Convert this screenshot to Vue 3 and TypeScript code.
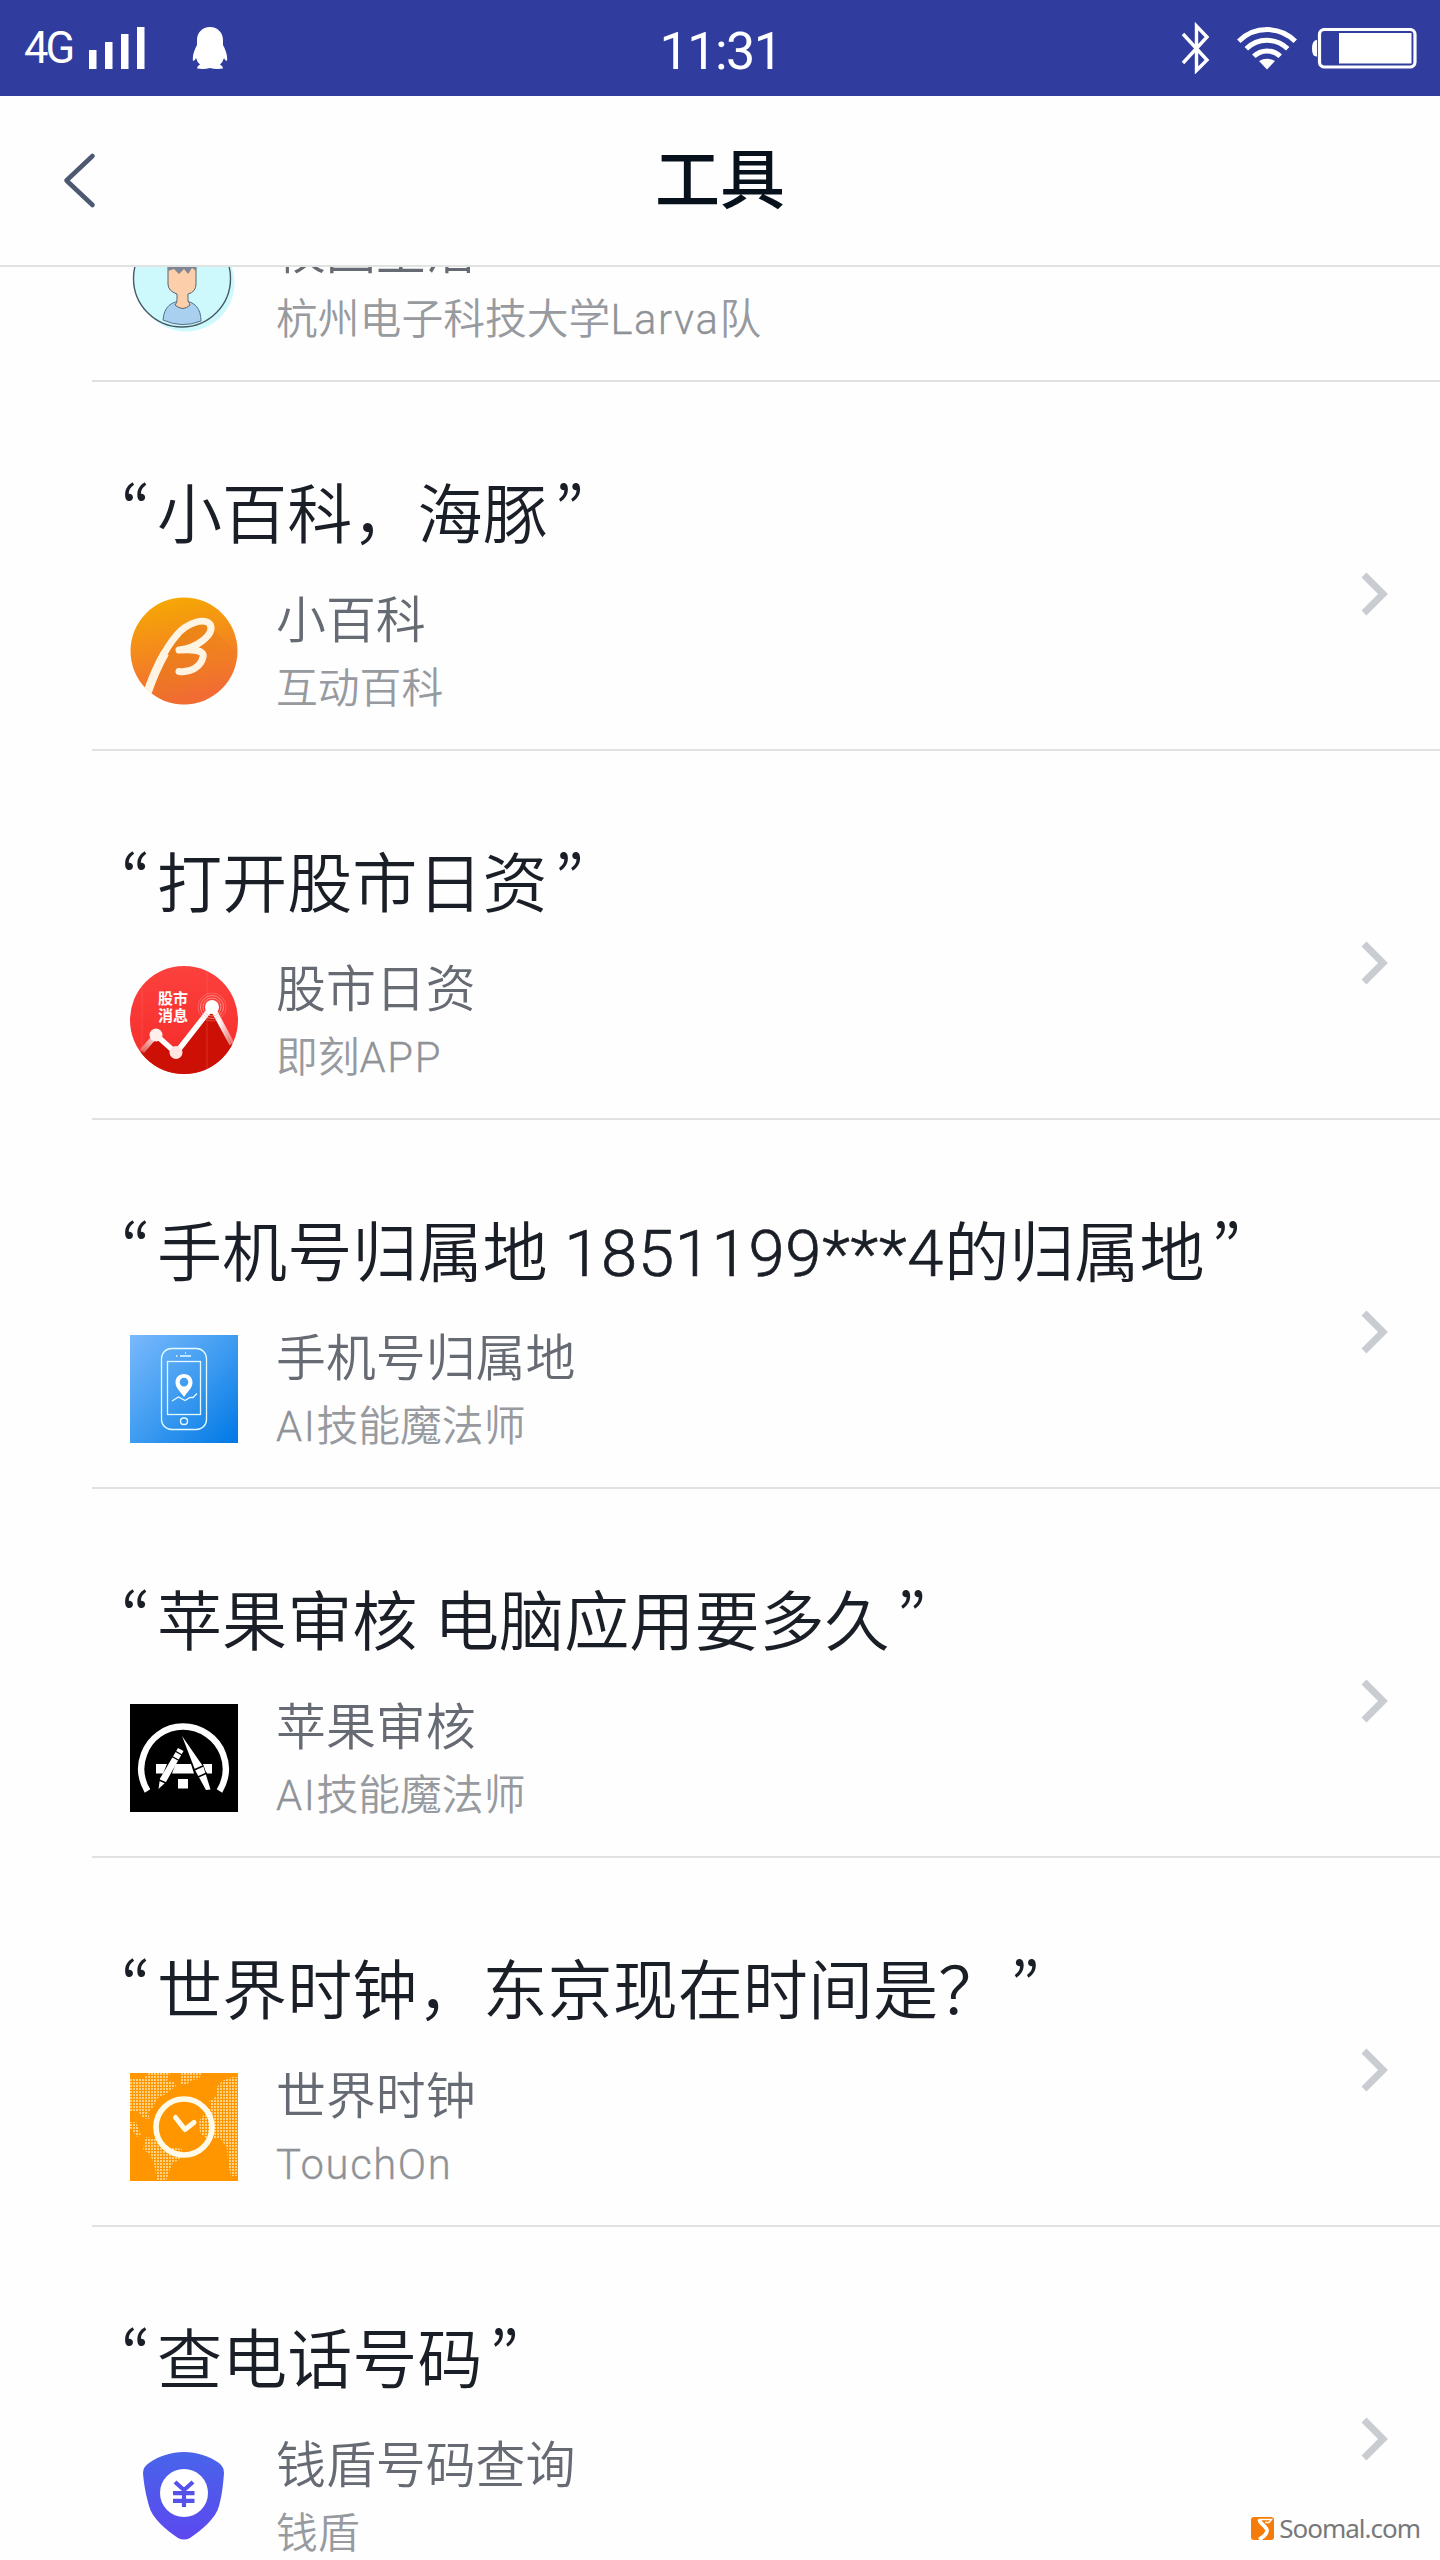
<script setup lang="ts">
type IconKind = 'campus' | 'beta' | 'stock' | 'phone' | 'appstore' | 'clock' | 'shield'

interface Skill {
  icon: IconKind
  phrase: string
  name: string
  vendor: string
}

const skills: Skill[] = [
  { icon: 'campus', phrase: '', name: '校园生活', vendor: '杭州电子科技大学Larva队' },
  { icon: 'beta', phrase: '小百科，海豚', name: '小百科', vendor: '互动百科' },
  { icon: 'stock', phrase: '打开股市日资', name: '股市日资', vendor: '即刻APP' },
  { icon: 'phone', phrase: '手机号归属地 1851199***4的归属地', name: '手机号归属地', vendor: 'AI技能魔法师' },
  { icon: 'appstore', phrase: '苹果审核 电脑应用要多久', name: '苹果审核', vendor: 'AI技能魔法师' },
  { icon: 'clock', phrase: '世界时钟，东京现在时间是？', name: '世界时钟', vendor: 'TouchOn' },
  { icon: 'shield', phrase: '查电话号码', name: '钱盾号码查询', vendor: '钱盾' },
]

// Latin runs carry their own weight and tracking next to the Chinese text.
function runs(text: string): { text: string; latin: boolean }[] {
  return (text.match(/[\x20-\x7e]+|[^\x20-\x7e]+/g) ?? []).map((part) => ({
    text: part,
    latin: /[\x20-\x7e]/.test(part),
  }))
}
</script>

<template>
  <div class="screen">
    <div class="status">
      <div class="status-left">
        <span class="network">4G</span>
        <svg class="signal" width="56" height="42" viewBox="0 0 56 42" fill="#fff">
          <rect x="0" y="23" width="7.5" height="19" />
          <rect x="16" y="15" width="7.5" height="27" />
          <rect x="32" y="7" width="7.5" height="35" />
          <rect x="48" y="0" width="7.5" height="42" />
        </svg>
        <svg class="penguin" width="36" height="42" viewBox="0 0 36 42" fill="#fff">
          <path d="M18 0C26 0 31 6 31 13V18C33 22 36 28 35 34Q33 34 32 31Q31 35 28 37.500Q31 39 31 41.500Q24 42.500 18 41Q12 42.500 5 41.500Q5 39 8 37.500Q5 35 4 31Q3 34 1 34C0 28 3 22 5 18V13C5 6 10 0 18 0Z" />
        </svg>
      </div>
      <span class="time">11:31</span>
      <div class="status-right">
        <svg width="30" height="52" viewBox="0 0 30 52" fill="none" stroke="#fff" stroke-width="3.400">
          <path d="M2 12L26 38L15.500 48.500V4L26 15L2 41" />
        </svg>
        <svg class="wifi" width="60" height="43" viewBox="0 0 60 43">
          <g fill="none" stroke="#fff" stroke-width="5">
            <path d="M1.800 14.200A40 40 0 0 1 58.200 14.200" />
            <path d="M9.300 21.800A29.500 29.500 0 0 1 50.700 21.800" />
            <path d="M16.800 29.300A18.800 18.800 0 0 1 43.200 29.300" />
          </g>
          <path d="M22 34Q30 29.500 38 34L30 42.500Z" fill="#fff" />
        </svg>
        <svg class="battery" width="105" height="41" viewBox="0 0 105 41">
          <path d="M5 12Q0 12 0 20.500T5 28.500Z" fill="#fff" />
          <rect x="7.500" y="1.500" width="95.500" height="37.500" rx="5" fill="none" stroke="#fff" stroke-width="3.200" />
          <rect x="27" y="5" width="72.500" height="30.500" fill="#fff" />
        </svg>
      </div>
    </div>

    <div class="header">
      <svg class="back" width="36" height="60" viewBox="0 0 36 60" fill="none" stroke="#4d5871" stroke-width="4.600" stroke-linecap="round" stroke-linejoin="round">
        <path d="M32.500 5L6.500 29.500L32.500 54" />
      </svg>
      <h1>工具</h1>
    </div>

    <div class="viewport">
      <ul class="list">
        <li v-for="skill in skills" :key="skill.icon" class="row">
          <div class="body">
            <p class="phrase"><template v-if="skill.phrase"><span class="quote open">“</span><span v-for="(run, i) in runs(skill.phrase)" :key="i" :class="{ 'phrase-latin': run.latin }">{{ run.text }}</span><span class="quote close">”</span></template></p>
            <div class="app">
              <svg class="icon" width="108" height="108" viewBox="0 0 108 108">
                <g v-if="skill.icon === 'campus'">
                  <circle cx="56" cy="55" r="48.500" fill="#cdf9fc" />
                  <circle cx="52" cy="50.500" r="48.500" fill="#cdf9fc" stroke="#475a66" stroke-width="1.400" />
                  <path d="M33 92C34 79 41 73 53 73C65 73 71 81 71 93A48 48 0 0 1 33 92Z" fill="#a9d0ee" stroke="#55708a" stroke-width="1" />
                  <path d="M38 30H66V56Q66 64 58 66V73Q60 76 60 77Q53 84 45 77Q47 75 47 72V66Q38 63 38 56Z" fill="#fdceaa" stroke="#5a6470" stroke-width="1" />
                  <path d="M38 28H66V43L62 40L58 46L54 41L49 46L44 41L38 43Z" fill="#7e8793" />
                </g>
                <g v-else-if="skill.icon === 'beta'">
                  <defs>
                    <linearGradient id="betaBg" x1="0" y1="0" x2=".2" y2="1">
                      <stop offset="0" stop-color="#f6ad00" />
                      <stop offset="1" stop-color="#f26a35" />
                    </linearGradient>
                    <linearGradient id="betaShade" x1="0" y1="0" x2="1" y2="1">
                      <stop offset="0" stop-color="#d7720e" />
                      <stop offset=".9" stop-color="#ee7a25" stop-opacity="0" />
                    </linearGradient>
                    <clipPath id="betaClip"><circle cx="54" cy="54" r="53.500" /></clipPath>
                  </defs>
                  <circle cx="54" cy="54" r="53.500" fill="url(#betaBg)" />
                  <g clip-path="url(#betaClip)">
                    <path d="M50 38Q64 23 78 28L108 56V108H30L22 88Q36 56 50 38Z" fill="url(#betaShade)" opacity=".6" />
                    <path d="M17 97C24 76 34 53 46 39C57 25 76 20 80.500 28C84 38 67 51 49 53C62 52 75 53 73 60C71 69 62 76 49 74.500" fill="none" stroke="#fff3e2" stroke-width="7" stroke-linecap="round" stroke-linejoin="round" />
                    <path d="M17 97C22 82 28 68 35 56" fill="none" stroke="#fff3e2" stroke-width="8.500" />
                  </g>
                </g>
                <g v-else-if="skill.icon === 'stock'">
                  <defs>
                    <linearGradient id="stockBg" x1="0" y1="0" x2="0" y2="1">
                      <stop offset="0" stop-color="#fc413e" />
                      <stop offset="1" stop-color="#f52b28" />
                    </linearGradient>
                    <linearGradient id="stockLine" gradientUnits="userSpaceOnUse" x1="10" y1="0" x2="103" y2="0">
                      <stop offset="0" stop-color="#fff" stop-opacity=".2" />
                      <stop offset=".2" stop-color="#fff" />
                      <stop offset=".85" stop-color="#fff" />
                      <stop offset="1" stop-color="#fff" stop-opacity=".3" />
                    </linearGradient>
                    <clipPath id="stockClip"><circle cx="54" cy="54" r="54" /></clipPath>
                  </defs>
                  <g clip-path="url(#stockClip)">
                    <rect width="108" height="108" fill="url(#stockBg)" />
                    <path d="M0 97L12 85L26 69L46 87L82 41L108 88V108H0Z" fill="#cc1006" />
                    <path d="M12 0V108M77 0V108" stroke="#ff7a70" stroke-width=".6" opacity=".5" />
                    <path d="M12 85L26 69L46 87L82 41L102 78" fill="none" stroke="url(#stockLine)" stroke-width="5.500" stroke-linejoin="round" />
                    <g fill="none" stroke="#ffb0aa" stroke-width=".7">
                      <circle cx="82" cy="41" r="9" />
                      <circle cx="82" cy="41" r="11.500" />
                      <circle cx="82" cy="41" r="14" opacity=".5" />
                    </g>
                    <circle cx="26" cy="69" r="6.500" fill="#fff0ee" />
                    <circle cx="46" cy="86.500" r="6.500" fill="#ffe6e3" />
                    <circle cx="82" cy="41" r="7" fill="#fff" />
                  </g>
                  <text class="stock-text" x="28" y="38">股市</text>
                  <text class="stock-text" x="28" y="55">消息</text>
                </g>
                <g v-else-if="skill.icon === 'phone'">
                  <defs>
                    <linearGradient id="phoneBg" x1="0" y1="0" x2="1" y2="1">
                      <stop offset="0" stop-color="#79b9fc" />
                      <stop offset=".5" stop-color="#3f9cf0" />
                      <stop offset="1" stop-color="#0078e6" />
                    </linearGradient>
                  </defs>
                  <rect width="108" height="108" fill="url(#phoneBg)" />
                  <g fill="none" stroke="#e6fbff" stroke-width="1.300">
                    <rect x="31.500" y="13.500" width="45" height="81" rx="10" />
                    <rect x="37.500" y="26.500" width="33" height="53" />
                    <path d="M50 21H61M46 21H47.500M55 18H56" stroke-width="1.600" />
                    <rect x="50.500" y="83" width="7" height="6.500" rx="3" />
                    <path d="M42 66L48.500 62L55 65.500L60 62.500H63L67 58.500" />
                  </g>
                  <path d="M54 39C59 39 62.500 42.500 62.500 47.500C62.500 53 57 57 54 62C51 57 45.500 53 45.500 47.500C45.500 42.500 49 39 54 39ZM54 42.800A4.300 4.300 0 1 0 54 51.400A4.300 4.300 0 1 0 54 42.800Z" fill="#fff" />
                </g>
                <g v-else-if="skill.icon === 'appstore'">
                  <rect width="108" height="108" fill="#000" />
                  <path d="M17.500 87C11 76 9 63 14 50C20 34 35 22.500 53 22.500S87 34 93 50C98 63 96 76 89.500 87" fill="none" stroke="#fff" stroke-width="6.400" />
                  <g fill="#fff">
                    <path d="M26 60H37L33 69.500H26ZM45.500 60H61L64 69.500H42ZM73 60H82V69.500H76.500ZM48 75H58V84.500H48Z" />
                    <path d="M48 44L53.500 47L36 78L28.500 85L30 74.500Z" />
                    <path d="M52 32L73.500 63L80.500 85.500L76 86L65.500 67Z" />
                  </g>
                  <path d="M45 47L52 51M42 52.500L50 57M29 76L36 79M64 66L73 62M68 73L77 69" stroke="#000" stroke-width="1.400" />
                </g>
                <g v-else-if="skill.icon === 'clock'">
                  <defs>
                    <pattern id="dots" width="3" height="3" patternUnits="userSpaceOnUse">
                      <rect width="2" height="2" fill="#ffe0a0" />
                    </pattern>
                  </defs>
                  <rect width="108" height="108" fill="#ff9600" />
                  <g fill="url(#dots)" opacity=".8">
                    <path d="M0 6L14 5L19 0H40L37 8H43L46 13L36 21L28 25L23 34L18 40L20 46L13 45L8 38H0Z" />
                    <path d="M50 0H72L69 6L62 7L56 12H50Z" />
                    <path d="M0 49L6 49L11 62L7 64L0 55Z" />
                    <path d="M16 64L26 66L34 73L52 76L51 86L43 90L39 99L36 108H27L24 90L20 82L13 76Z" />
                    <path d="M92 8L102 4H108V103H101L98 90L97 74L90 66L77 66L70 60L69 48L76 39L81 34L79 28L87 23L86 15Z" />
                  </g>
                  <circle cx="54" cy="54" r="28" fill="none" stroke="#fffbe8" stroke-width="5.600" />
                  <path d="M45.500 44.500L55 56.500L64 49.500" fill="none" stroke="#fffbe8" stroke-width="5" stroke-linecap="round" stroke-linejoin="round" />
                </g>
                <g v-else>
                  <defs>
                    <linearGradient id="shieldBg" x1="0" y1="0" x2="0" y2="1">
                      <stop offset="0" stop-color="#4864ea" />
                      <stop offset="1" stop-color="#5c48ef" />
                    </linearGradient>
                  </defs>
                  <path d="M54 10C67 10 79 14 89 21Q94 25 94 31C93 44 92 53 89 64C86 76 72 88 60 96Q54 99 48 96C36 88 22 76 19 64C16 53 14 44 13 31Q13 25 19 21C29 14 41 10 54 10Z" fill="url(#shieldBg)" />
                  <circle cx="54" cy="51" r="24" fill="#fff" />
                  <g fill="none" stroke="#5452e8" stroke-width="4.200">
                    <path d="M45 40L54 48L63 40M43 51.200H64.500M43 58.800H64.500M54 47V65" />
                  </g>
                </g>
              </svg>
              <div class="labels">
                <p class="name">{{ skill.name }}</p>
                <p class="vendor"><span v-for="(run, i) in runs(skill.vendor)" :key="i" :class="{ 'vendor-latin': run.latin }">{{ run.text }}</span></p>
              </div>
            </div>
          </div>
          <svg class="chevron" width="28" height="44" viewBox="0 0 28 44" fill="none" stroke="#c9ccd1" stroke-width="7">
            <path d="M3 3L22 22L3 41" />
          </svg>
        </li>
      </ul>
    </div>

    <div class="watermark">
      <svg width="23" height="23" viewBox="0 0 23 23">
        <rect width="23" height="23" rx="3" fill="#f57c0b" />
        <path d="M8 2.500H20.500L18 5.500H14" fill="none" stroke="#fff" stroke-width="1.400" />
        <path d="M8.500 2.500C8 7 16.500 9 16 14C15.500 18 12 20 8 22.500" fill="none" stroke="#fff" stroke-width="3.800" />
      </svg>
      <span>Soomal.com</span>
    </div>
  </div>
</template>

<style>
body {
  margin: 0;
  background: #fefefe;
}
</style>

<style scoped>
.screen {
  position: relative;
  display: flex;
  flex-direction: column;
  width: 1440px;
  height: 2560px;
  overflow: hidden;
  background: #fefefe;
  font-family: Roboto, "Noto Sans CJK SC", sans-serif;
}

p,
h1,
ul {
  margin: 0;
  padding: 0;
}

.status {
  display: grid;
  grid-template-columns: 1fr auto 1fr;
  align-items: center;
  flex: none;
  height: 96px;
  box-sizing: border-box;
  padding: 0 23px 0 24px;
  background: #303d9e;
  color: #fff;
}

.status-left,
.status-right {
  display: flex;
  align-items: center;
}

.status-right {
  justify-content: flex-end;
}

.network {
  width: 65px;
  font-size: 43.500px;
  line-height: 94px;
  padding-top: 2px;
  letter-spacing: -3px;
}

.penguin {
  margin-left: 47px;
}

.time {
  font-size: 52px;
  line-height: 60px;
  letter-spacing: -1.500px;
  padding-top: 8px;
}

.wifi {
  margin-left: 26px;
}

.battery {
  margin-left: 15px;
}

.header {
  display: grid;
  grid-template-columns: 1fr auto 1fr;
  align-items: center;
  flex: none;
  height: 171px;
  box-sizing: border-box;
  border-bottom: 2px solid #e1e2e2;
  padding: 0 60px;
}

.header h1 {
  font-size: 65px;
  line-height: 96px;
  font-weight: 500;
  color: #07111b;
}

.viewport {
  flex: 1;
  min-height: 0;
  overflow: hidden;
}

.list {
  margin-top: -254px;
  list-style: none;
}

.row {
  display: flex;
  justify-content: space-between;
  height: 369px;
  box-sizing: border-box;
  margin-left: 92px;
  padding: 80px 51px 0 38px;
  border-bottom: 2px solid #e0e1e1;
}

.phrase {
  height: 135px;
  font-size: 65.100px;
  font-weight: 350;
  line-height: 96px;
  color: #1a1e26;
  white-space: pre;
}

.phrase-latin {
  font-weight: 300;
  letter-spacing: 0.750px;
  -webkit-text-stroke: 0.700px currentColor;
}

.quote {
  display: inline-block;
  position: relative;
  font-family: "Noto Sans CJK SC", sans-serif;
  font-feature-settings: "pwid";
}

.open {
  top: 1px;
  width: 36px;
  margin-left: -9px;
}

.close {
  top: 2px;
  margin-left: 7px;
}

.app {
  display: flex;
}

.icon {
  display: block;
  flex: none;
}

.stock-text {
  font: 700 15px "Noto Sans CJK SC", sans-serif;
  fill: #fff;
}

.labels {
  margin-left: 38px;
  white-space: nowrap;
}

.name {
  font-size: 49.900px;
  font-weight: 350;
  line-height: 60px;
  margin-top: -6px;
  color: #666a72;
}

.vendor {
  font-size: 41.800px;
  font-weight: 350;
  line-height: 60px;
  margin-top: 8px;
  color: #979a9f;
}

.vendor-latin {
  font-weight: 300;
  letter-spacing: 1.600px;
  color: #8f9297;
  -webkit-text-stroke: 0.300px currentColor;
}

.chevron {
  flex: none;
  margin-top: 110px;
}

.watermark {
  position: absolute;
  right: 20px;
  bottom: 14px;
  display: flex;
  align-items: center;
  gap: 5px;
  font-family: "Noto Sans", sans-serif;
  font-size: 26px;
  line-height: 36px;
  letter-spacing: -1px;
  color: #77787a;
}
</style>
